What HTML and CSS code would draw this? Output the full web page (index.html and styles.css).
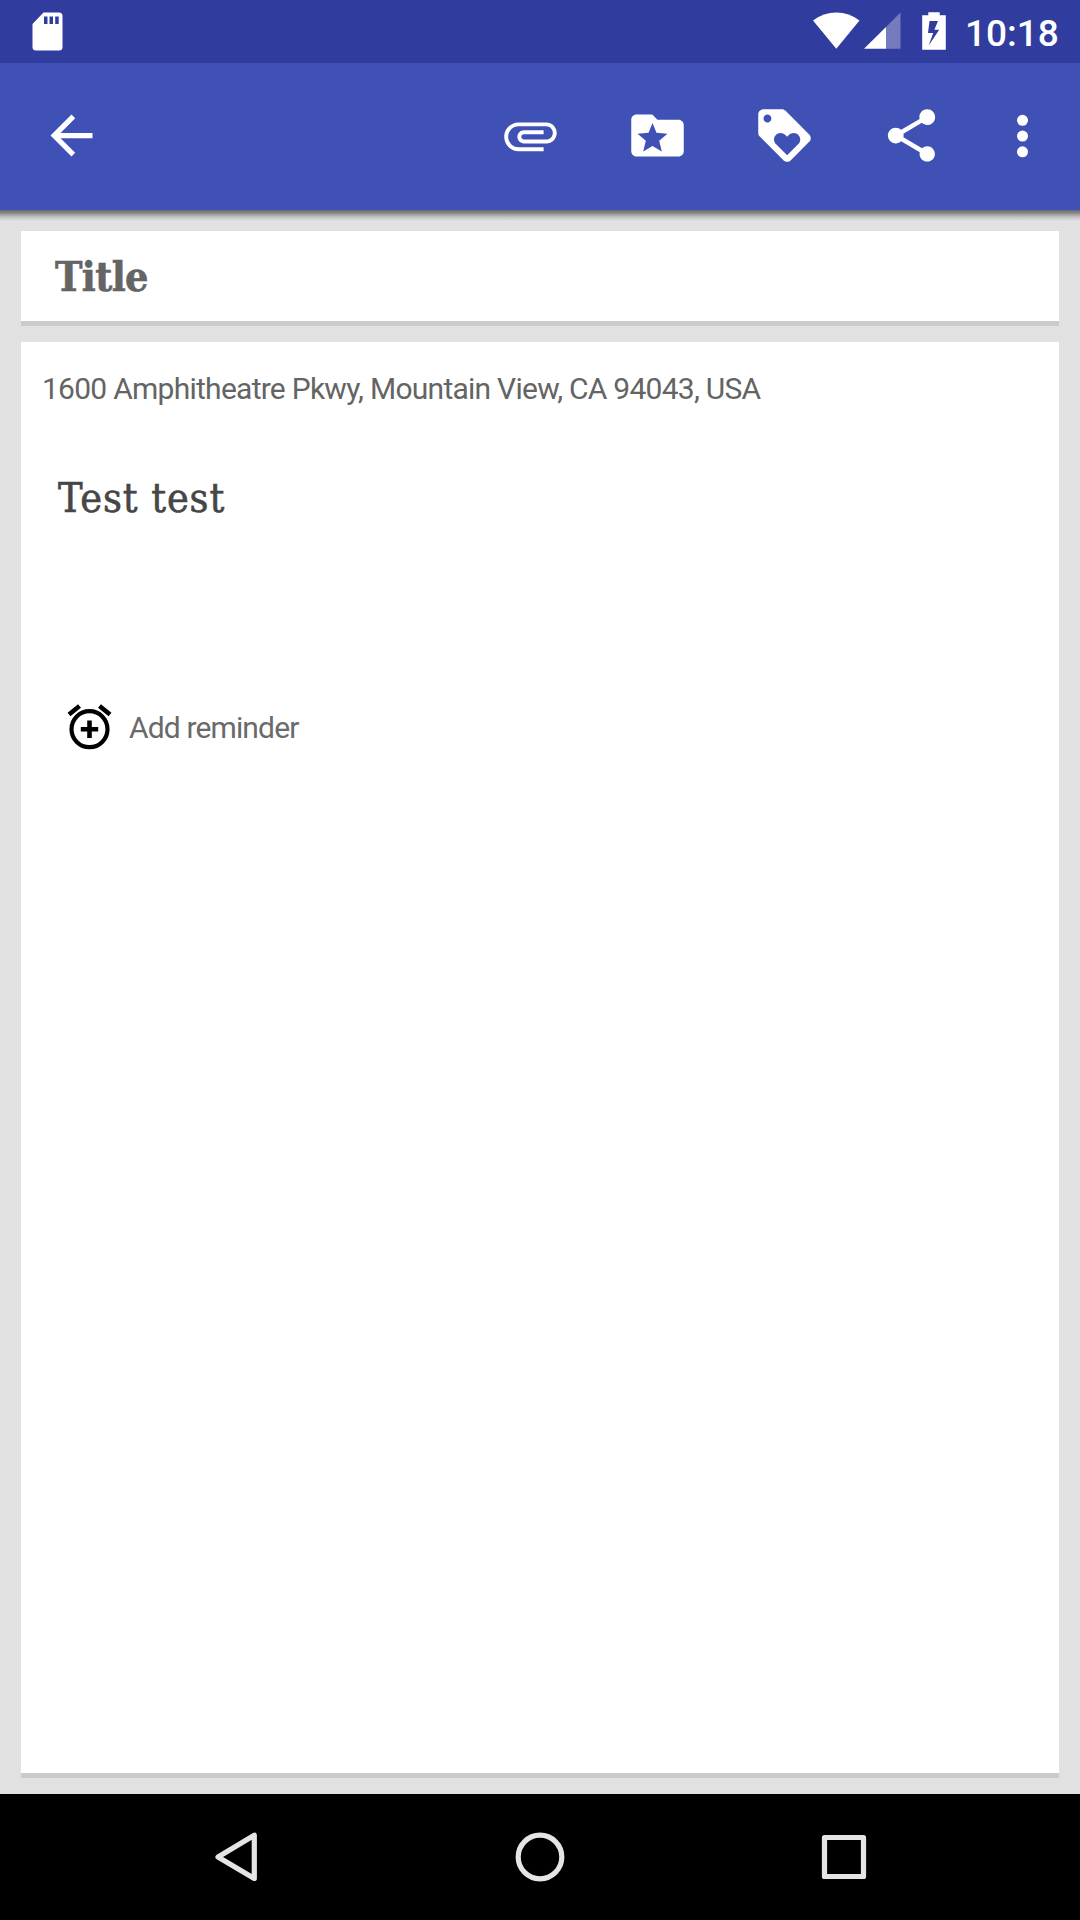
FILE: index.html
```html
<!DOCTYPE html>
<html lang="en">
<head>
<meta charset="utf-8">
<title>Note</title>
<link rel="stylesheet" href="styles.css">
</head>
<body>
<div class="screen">
  <div class="status">
    <svg class="sd" width="31" height="39" viewBox="0 0 31 39"><path fill="#fff" fill-rule="evenodd" d="M11.5.5H27Q30.500.5 30.500 4V35Q30.500 38.500 27 38.500H4Q.5 38.500.5 35V12zM12 4.500V12h3.500V4.500zM17.500 4.500V12h3.500V4.500zM23.200 4.500V12h3.500V4.500z"/></svg>
    <svg class="wifi" width="47" height="37" viewBox="0 0 47 37"><path fill="#fff" d="M0 8.500Q10.500 .5 23.300.5T46.500 8.500L23.300 36.700z"/></svg>
    <svg class="cell" width="37" height="37" viewBox="0 0 37 37"><path fill="#fff" fill-opacity=".33" d="M36.500.5V36.700H22V15z"/><path fill="#fff" d="M0 36.700L22 15V36.700z"/></svg>
    <svg class="battery" width="24" height="38" viewBox="0 0 24 38"><path fill="#fff" fill-rule="evenodd" d="M6.300.3H17.700V3.200H23.800V37.700H.2V3.200H6.300zM7.500 9L6 21h5.200L6.700 33.500 17.200 17.800H12.400L16 9z"/></svg>
    <span class="clock">10:18</span>
  </div>
  <header class="toolbar">
    <svg class="icon back" viewBox="0 0 24 24"><path d="M20 11H7.830l5.590-5.590L12 4l-8 8 8 8 1.410-1.410L7.830 13H20v-2z"/></svg>
    <svg class="icon" viewBox="0 0 24 24"><path d="M7.500 18C4.460 18 2 15.540 2 12.500S4.460 7 7.500 7H18c2.210 0 4 1.790 4 4s-1.790 4-4 4H9.500C8.120 15 7 13.880 7 12.500S8.120 10 9.500 10H17v1.500H9.500c-.55 0-1 .45-1 1s.45 1 1 1H18c1.380 0 2.500-1.120 2.500-2.500S19.380 8.500 18 8.500H7.500c-2.210 0-4 1.790-4 4s1.790 4 4 4H17V18H7.500z"/></svg>
    <svg class="icon" viewBox="0 0 24 24"><path fill-rule="evenodd" d="M20 6h-8l-2-2H4c-1.100 0-2 .9-2 2v12c0 1.100.9 2 2 2h16c1.100 0 2-.9 2-2V8c0-1.100-.9-2-2-2zM10.100 7.200L11.600 10.950 15.800 11.300 12.650 14 13.650 18.100 10.100 16 6.550 18.100 7.550 14 4.400 11.300 8.600 10.950z"/></svg>
    <svg class="icon" viewBox="0 0 24 24"><path d="M21.410 11.580l-9-9C12.050 2.220 11.550 2 11 2H4c-1.100 0-2 .9-2 2v7c0 .55.22 1.050.59 1.420l9 9c.36.36.86.58 1.410.58.55 0 1.050-.22 1.410-.59l7-7c.37-.36.59-.86.59-1.410 0-.55-.23-1.060-.59-1.420zM5.500 7C4.670 7 4 6.330 4 5.500S4.670 4 5.500 4 7 4.670 7 5.500 6.330 7 5.500 7zm11.770 8.270L13 19.540l-4.270-4.270C8.280 14.810 8 14.190 8 13.500c0-1.380 1.120-2.500 2.500-2.500.69 0 1.320.28 1.770.74l.73.72.73-.73c.45-.45 1.080-.73 1.770-.73 1.380 0 2.500 1.120 2.500 2.500 0 .69-.28 1.320-.73 1.770z"/></svg>
    <svg class="icon" viewBox="0 0 24 24"><path d="M18 16.080c-.76 0-1.440.3-1.960.77L8.910 12.700c.05-.23.09-.46.09-.7s-.04-.47-.09-.7l7.050-4.110c.54.5 1.250.81 2.040.81 1.660 0 3-1.340 3-3s-1.340-3-3-3-3 1.340-3 3c0 .24.04.47.09.7L8.040 9.810C7.500 9.310 6.790 9 6 9c-1.660 0-3 1.340-3 3s1.340 3 3 3c.79 0 1.500-.31 2.040-.81l7.120 4.160c-.05.21-.08.43-.08.65 0 1.610 1.310 2.920 2.920 2.920s2.920-1.310 2.920-2.920-1.310-2.920-2.920-2.920z"/></svg>
    <svg class="icon more" viewBox="0 0 24 24"><circle cx="12" cy="6.200" r="2.100"/><circle cx="12" cy="12.200" r="2.100"/><circle cx="12" cy="18.200" r="2.100"/></svg>
  </header>
  <main class="content">
    <section class="card title-card"><span class="slab title">Title</span></section>
    <section class="card note-card">
      <p class="address">1600 Amphitheatre Pkwy, Mountain View, CA 94043, USA</p>
      <p class="slab note">Test test</p>
      <div class="reminder">
        <svg width="46" height="46" viewBox="0 0 46 46" fill="none" stroke="#000"><circle cx="22.500" cy="25.200" r="18" stroke-width="4.200"/><path stroke-width="4.600" d="M2 10.500L12.500 2M43 10.500L32.500 2M22.500 16.500V34M13.800 25.200H31.200"/></svg>
        <span class="reminder-label">Add reminder</span>
      </div>
    </section>
  </main>
  <nav class="navbar">
    <svg width="50" height="50" viewBox="0 0 50 50"><path d="M43.300 3.200V46.500L7 25z"/></svg>
    <svg width="50" height="50" viewBox="0 0 50 50"><circle cx="25" cy="25" r="21.800"/></svg>
    <svg width="50" height="50" viewBox="0 0 50 50"><path d="M5.500 5.500H44.500V44.500H5.500z"/></svg>
  </nav>
</div>
</body>
</html>
```
FILE: styles.css
```css
* { box-sizing: border-box; }
body { margin: 0; font-family: Roboto, sans-serif; }
svg { display: block; flex: none; }
p { margin: 0; }
.screen {
  width: 1080px;
  height: 1920px;
  display: flex;
  flex-direction: column;
  background: #e1e1e1;
  overflow: hidden;
}
.status {
  height: 63px;
  flex: none;
  display: flex;
  align-items: flex-start;
  padding: 12px 0 0 32px;
  background: #303d9f;
}
.wifi { margin-left: 750px; }
.cell { margin-left: 4px; }
.battery { margin-left: 21px; }
.clock {
  margin-left: 19px;
  font-size: 37px;
  line-height: 43px;
  font-weight: 500;
  color: #fff;
  white-space: nowrap;
}
.toolbar {
  height: 147px;
  flex: none;
  display: flex;
  align-items: center;
  gap: 64px;
  padding: 0 26px 2px 40px;
  background: #3f51b5;
}
.icon { width: 63px; height: 63px; fill: #fff; }
.back { margin-right: auto; }
.more { margin-left: -16px; }
.content {
  flex: 1;
  display: flex;
  flex-direction: column;
  gap: 16px;
  padding: 21px 21px 16px;
  background: linear-gradient(#686868, #898989 3px, #c2c2c2 7px, #e1e1e1 11px);
}
.card { background: #fff; border-bottom: 5px solid #cbcbcb; }
.title-card { height: 95px; padding: 19px 34px; }
.note-card { flex: 1; }
.slab {
  display: block;
  width: max-content;
  font-family: "Roboto Slab", "DejaVu Serif Condensed", "DejaVu Serif", serif;
}
.title {
  font-size: 41px;
  line-height: 54px;
  font-weight: 700;
  letter-spacing: -0.6px;
  color: #646464;
  -webkit-text-stroke: 0.6px #646464;
}
.address {
  padding: 25px 0 0 21px;
  font-size: 30px;
  line-height: 44px;
  letter-spacing: -0.74px;
  color: #646464;
  white-space: nowrap;
}
.note {
  margin: 60px 0 0 37px;
  font-size: 41px;
  line-height: 54px;
  letter-spacing: 0.9px;
  color: #464646;
  -webkit-text-stroke: 0.6px #464646;
}
.reminder {
  display: flex;
  align-items: flex-start;
  gap: 16px;
  margin: 179px 0 0 46px;
}
.reminder-label {
  font-size: 30px;
  line-height: 48px;
  letter-spacing: -0.86px;
  color: #6a6a6a;
}
.navbar {
  height: 126px;
  flex: none;
  display: grid;
  grid-template-columns: repeat(3, 304px);
  justify-content: center;
  justify-items: center;
  align-items: center;
  background: #000;
}
.navbar svg { fill: none; stroke: #e5e5e5; stroke-width: 5.2; stroke-linejoin: round; }
```
